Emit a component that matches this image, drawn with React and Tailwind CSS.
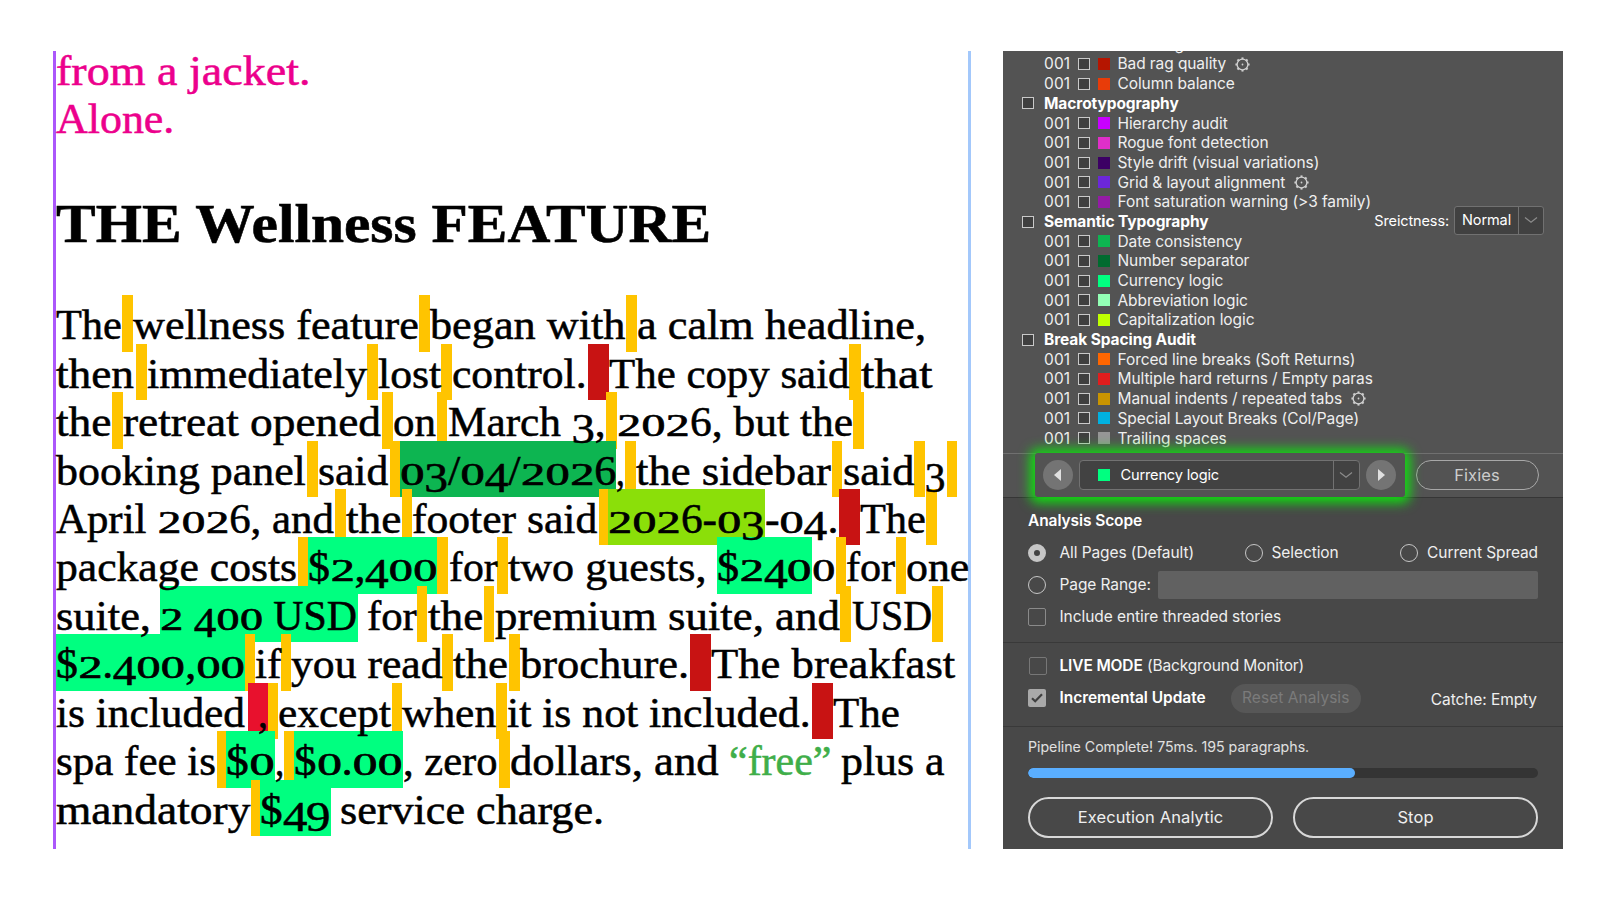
import { useLayoutEffect, useRef, useState } from "react";

const SERIF = "font-['Liberation_Serif',serif]";
const Y = "bg-[#ffc400]";
const R = "bg-[#c81313]";
const MINT = "bg-[#00ff80]";

/* Each piece: [text, left, right, background?, colour?] on the page's horizontal scale. */
const LINES = [
  [["The", 56, 122], [" ", 122, 133.3, Y], ["wellness feature", 133.3, 419], [" ", 419.3, 430, Y], ["began with", 430, 625.5], [" ", 626, 637.3, Y], ["a calm headline,", 637.5, 927]],
  [["then", 56, 134], [" ", 135.7, 147, Y], ["immediately", 147, 367], [" ", 367.5, 378, Y], ["lost", 378, 441], [" ", 441, 452.3, Y], ["control.", 452.5, 587.5], ["  ", 588, 608.7, R], ["The copy said", 608.7, 849], [" ", 849.3, 860.7, Y], ["that", 861, 932]],
  [["the", 56, 112], [" ", 112, 122.7, Y], ["retreat opened", 122.7, 381], [" ", 382, 392.7, Y], ["on", 393, 436], [" ", 436.7, 447.5, Y], ["March 3,", 448, 606], [" ", 606, 617, Y], ["2026, but the", 617, 852.5], [" ", 853, 863.7, Y]],
  [["booking panel", 56, 306], [" ", 307, 318, Y], ["said", 318, 388], [" ", 390, 400, Y], ["03/04/2026", 400, 616, "bg-[#0db551]"], [",", 616, 625], [" ", 625.3, 636.3, Y], ["the sidebar", 636.5, 831], [" ", 831.7, 842.5, Y], ["said", 843, 914], [" ", 914.3, 925.3, Y], ["3", 925.5, 946], [" ", 946.7, 957.5, Y]],
  [["April 2026, and", 56, 334], [" ", 335, 345.5, Y], ["the", 345.5, 401.5], [" ", 401.7, 412.3, Y], ["footer said", 412.5, 598], [" ", 598.7, 608.3, Y], ["2026-03", 608.3, 764.7, "bg-[#8bdf09]"], ["-04.", 765, 838.5], ["  ", 839, 859.7, R], ["The", 859.7, 925.7], [" ", 926, 937, Y]],
  [["package costs", 56, 297.5], [" ", 297.7, 308, Y], ["$2,400", 308, 437.5, MINT], [" ", 437.5, 448.3, Y], ["for", 449, 497.5], [" ", 497.5, 508.3, Y], ["two guests,", 508.5, 707.5], [" ", 707.5, 717.3], ["$240", 717.3, 811.7, MINT], ["0", 811.7, 835], [" ", 836, 846.3, Y], ["for", 846.5, 895.5], [" ", 895.7, 906.3, Y], ["one", 906.3, 969.5]],
  [["suite,", 56, 151], [" ", 151, 160.3], ["2 400 USD", 160.3, 357.7, MINT], [" ", 357.7, 367], ["for", 367, 416.7], [" ", 416.7, 427.5, Y], ["the", 427.7, 483.5], [" ", 483.7, 494.5, Y], ["premium suite, and", 494.7, 839.7], [" ", 840.3, 851.3, Y], ["USD", 852, 932], [" ", 932, 943, Y]],
  [["$2.400,00", 56, 245, MINT], [" ", 245, 255, Y], ["if", 255, 281], [" ", 281, 290.7, Y], ["you read", 290.7, 442], [" ", 442.5, 453.5, Y], ["the", 453.5, 509], [" ", 509.3, 520.3, Y], ["brochure.", 520.5, 690], ["  ", 690.5, 711, R], ["The breakfast", 711, 955]],
  [["is included", 56, 245.5], [" ", 247.5, 257.5, "bg-[#e8112d]"], [",", 257.5, 267.7, "bg-[#e8112d]"], [" ", 267.7, 278, Y], ["except", 278.5, 391.3], [" ", 391.7, 402, Y], ["when", 402, 496], [" ", 496, 507.3, Y], ["it is not included.", 507.5, 811.5], ["  ", 812, 833, R], ["The", 833, 900]],
  [["spa fee is", 56, 216], [" ", 216.5, 226.3, Y], ["$0", 226.3, 275, MINT], [",", 275, 284.5], [" ", 284.5, 294.5, Y], ["$0.00", 294.5, 403, MINT], [", zero", 403, 498], [" ", 499, 510, Y], ["dollars, and", 510, 719], [" ", 719, 729], ["“free”", 729, 831.5, "", "text-[#3fae49]"], [" ", 831.5, 841], ["plus a", 841, 945]],
  [["mandatory", 56, 250.5], [" ", 250.7, 260.5, Y], ["$49", 260.5, 331, MINT], [" ", 331, 340], ["service charge.", 340, 604]],
];

/* Old-style figures: 0-2 sit at x-height, 3, 4, 5, 7 and 9 hang below the baseline. */
function figure(ch, i) {
  if ("012".includes(ch))
    return <span key={i} className="inline-block w-[0.56em] origin-[50%_83.75%] scale-x-[1.1] scale-y-[0.74] text-center leading-none [-webkit-text-stroke:0.9px_currentColor]">{ch}</span>;
  if ("34579".includes(ch))
    return <span key={i} className="inline-block w-[0.53em] translate-y-[0.16em] scale-x-[1.08] text-center leading-none">{ch}</span>;
  return ch;
}

function Fit({ text, width }) {
  const ref = useRef(null);
  const [scale, setScale] = useState(1);
  useLayoutEffect(() => {
    setScale(width / ref.current.offsetWidth);
  }, [width]);
  return (
    <span ref={ref} className="relative z-10 inline-block origin-left whitespace-pre" style={{ transform: `scaleX(${scale})` }}>
      {/\d/.test(text) ? [...text].map(figure) : text}
    </span>
  );
}

function Line({ pieces }) {
  return (
    <div className="flex h-[48.43px] items-start">
      {pieces.map(([text, a, b, bg = "", color = ""], i) => {
        const prev = i ? pieces[i - 1][2] : 56;
        return (
          <span key={i} className={`block h-[56.5px] shrink-0 leading-[60px] whitespace-pre ${bg} ${color}`} style={{ width: b - a, marginLeft: a - prev }}>
            {text.trim() ? <Fit text={text} width={b - a} /> : text}
          </span>
        );
      })}
    </div>
  );
}

function Document() {
  return (
    <div className={`flex h-[798px] w-[918px] flex-col border-l-[3px] border-r-[3px] border-l-[#ab57fb] border-r-[#a3c8fb] text-[43px] text-black [-webkit-text-stroke:0.55px_currentColor] ${SERIF}`}>
      <div className="h-[97px] text-[#ec008c]">
        <div className="h-[49px] leading-[39.5px]"><Fit text="from a jacket." width={255} /></div>
        <div className="h-[48px] leading-[38.5px]"><Fit text="Alone." width={118.5} /></div>
      </div>
      <div className="h-[147.3px] pt-[41px] text-[54px] leading-[70px] font-bold"><Fit text="THE Wellness FEATURE" width={655} /></div>
      {LINES.map((p, i) => <Line key={i} pieces={p} />)}
    </div>
  );
}

function Gear() {
  return (
    <svg width="15" height="15" viewBox="0 0 15 15" className="ml-[9px] text-[#cfcfcf]" fill="none" stroke="currentColor">
      <circle cx="7.5" cy="7.5" r="5.4" strokeWidth="1.3" />
      <g strokeWidth="2">
        {[0, 45, 90, 135, 180, 225, 270, 315].map((a) => <path key={a} d="M7.5 2.3V0.4" transform={`rotate(${a} 7.5 7.5)`} />)}
      </g>
      <circle cx="7.5" cy="7.5" r="0.9" fill="currentColor" stroke="none" />
    </svg>
  );
}

const Box = () => <span className="size-3 shrink-0 border border-[#c9c9c9] bg-[#3f3f3f]" />;

function Item({ color, label, gear }) {
  return (
    <div className="flex h-[19.7px] items-center pl-[41px]">
      <span className="w-[34px] tracking-[0.1px]">001</span>
      <Box />
      <span className={`ml-[8px] mr-[7.5px] size-3 shrink-0 ${color}`} />
      <span>{label}</span>
      {gear && <Gear />}
    </div>
  );
}

function Section({ title, children }) {
  return (
    <div className="flex h-[19.7px] items-center pl-[19px]">
      <Box />
      <span className="ml-[10px] font-bold text-white">{title}</span>
      {children}
    </div>
  );
}

const Chevron = () => (
  <svg width="14" height="8" viewBox="0 0 14 8" fill="none" stroke="#8c8c8c" strokeWidth="1.2"><path d="M1 1.5 7 6.3 13 1.5" /></svg>
);

const Radio = ({ on }) => (
  <span className={on ? "size-[18px] shrink-0 rounded-full border-[6px] border-[#c6c6c6] bg-[#424242]" : "size-[18px] shrink-0 rounded-full border-[1.5px] border-[#c6c6c6]"} />
);

function Panel() {
  return (
    <div className="flex h-[798px] w-[560px] flex-col overflow-hidden bg-[#484848] font-[Inter,sans-serif] text-[15.5px] tracking-[-0.09px] text-[#efefef]">
      <div className="flex h-[401.5px] flex-col justify-end overflow-hidden bg-[#535353] pb-[4.5px] whitespace-nowrap">
        <Item color="bg-[#b51500]" label="Word rag" />
        <Item color="bg-[#b51500]" label="Bad rag quality" gear />
        <Item color="bg-[#e83c09]" label="Column balance" />
        <Section title="Macrotypography" />
        <Item color="bg-[#c800ff]" label="Hierarchy audit" />
        <Item color="bg-[#df2fc9]" label="Rogue font detection" />
        <Item color="bg-[#3c0064]" label="Style drift (visual variations)" />
        <Item color="bg-[#6c27d9]" label="Grid & layout alignment" gear />
        <Item color="bg-[#941ba6]" label="Font saturation warning (>3 family)" />
        <Section title="Semantic Typography">
          <span className="relative -top-px ml-auto text-[14.5px] tracking-[-0.12px] text-white">Sreictness:</span>
          <span className="relative -top-[1.5px] mr-[19px] ml-[5px] flex h-[29px] w-[90px] items-center rounded-[3px] border border-[#717171] bg-[#414141] text-[14.5px] text-white">
            <span className="flex h-full w-[64px] items-center justify-center border-r border-[#717171]">Normal</span>
            <span className="flex flex-1 justify-center"><Chevron /></span>
          </span>
        </Section>
        <Item color="bg-[#0db551]" label="Date consistency" />
        <Item color="bg-[#006b2f]" label="Number separator" />
        <Item color="bg-[#00ff80]" label="Currency logic" />
        <Item color="bg-[#93ffb5]" label="Abbreviation logic" />
        <Item color="bg-[#bfff00]" label="Capitalization logic" />
        <Section title="Break Spacing Audit" />
        <Item color="bg-[#ff6600]" label="Forced line breaks (Soft Returns)" />
        <Item color="bg-[#e11d1d]" label="Multiple hard returns / Empty paras" />
        <Item color="bg-[#c99400]" label="Manual indents / repeated tabs" gear />
        <Item color="bg-[#00b1e0]" label="Special Layout Breaks (Col/Page)" />
        <Item color="bg-[#969696]" label="Trailing spaces" />
      </div>

      <div className="flex h-[45px] shrink-0 items-center border-t border-b border-t-[#707070] border-b-[#363636] bg-[#535353] pl-8">
        <div className="relative flex h-[44px] w-[370px] shrink-0 items-center rounded-[3px] bg-[#535353] pl-[8px] shadow-[0_1px_12px_5px_#10e010]">
          <span className="flex size-[30px] items-center justify-center rounded-full bg-[#747474] pr-[2px]">
            <svg width="7" height="12" viewBox="0 0 7 12" fill="#e0e0e0"><path d="M7 0v12L0 6z" /></svg>
          </span>
          <div className="ml-[5.5px] flex h-[30px] w-[281.5px] items-center rounded-[4px] border border-[#727272] bg-[#424242] text-white">
            <span className="ml-[18.5px] size-3 bg-[#00ff80]" />
            <span className="ml-[10.5px] flex-1 pt-px text-[14.6px] tracking-[-0.17px]">Currency logic</span>
            <span className="flex h-full w-[26.5px] items-center justify-center border-l border-[#727272]"><Chevron /></span>
          </div>
          <span className="ml-[6px] flex size-[30px] items-center justify-center rounded-full bg-[#747474] pl-px">
            <svg width="7" height="12" viewBox="0 0 7 12" fill="#e0e0e0"><path d="M0 0v12l7-6z" /></svg>
          </span>
        </div>
        <button className="ml-[10.5px] h-[30px] w-[123px] rounded-full border-[1.5px] border-[#a8a8a8] text-[16.5px] tracking-[0.1px] text-[#cdcdcd]">Fixies</button>
      </div>

      <div className="flex h-[145px] shrink-0 flex-col border-b border-[#393939] pt-[13px] pr-[25px] pl-[25px]">
        <div className="h-5 leading-5 font-semibold text-white">Analysis Scope</div>
        <div className="mt-[6px] flex h-[32px] items-center">
          <Radio on /><span className="ml-[13.5px] w-[186px]">All Pages (Default)</span>
          <Radio /><span className="ml-[8.5px] w-[128.5px]">Selection</span>
          <Radio /><span className="ml-[9.5px] whitespace-nowrap">Current Spread</span>
        </div>
        <div className="flex h-[32px] items-center">
          <Radio /><span className="ml-[13.5px] w-[98px]">Page Range:</span>
          <span className="h-7 flex-1 rounded-[2px] bg-[#616161]" />
        </div>
        <div className="flex h-[32px] items-center">
          <span className="size-[18px] rounded-[2px] border border-[#8a8a8a]" /><span className="ml-[13.5px] tracking-[-0.06px]">Include entire threaded stories</span>
        </div>
      </div>

      <div className="flex h-[84px] shrink-0 flex-col border-b border-[#393939] pt-[8px] pr-[26px] pl-[25px]">
        <div className="flex h-[31px] items-center">
          <span className="ml-px size-[18px] rounded-[2px] border border-[#777]" />
          <span className="ml-[12.5px] tracking-[-0.14px]"><span className="font-semibold text-white">LIVE MODE</span> (Background Monitor)</span>
        </div>
        <div className="flex h-[33px] items-center">
          <span className="flex size-[18px] items-center justify-center rounded-[2px] bg-[#a9a9a9]">
            <svg width="12" height="10" viewBox="0 0 12 10" fill="none" stroke="#3f3f3f" strokeWidth="2.2"><path d="M1 5.2 4.2 8.2 11 1.2" /></svg>
          </span>
          <span className="ml-[13.5px] w-[171px] tracking-[-0.05px] font-semibold text-white">Incremental Update</span>
          <button className="h-[29px] w-[130.5px] rounded-full bg-[#575757] tracking-[0.05px] text-[#7b7b7b]">Reset Analysis</button>
          <span className="ml-auto pt-[3px]">Catche: Empty</span>
        </div>
      </div>

      <div className="flex flex-1 flex-col pt-[10px] pr-[25px] pl-[25px]">
        <div className="h-5 text-[14.2px] leading-5 tracking-[-0.02px] text-[#e0e0e0]">Pipeline Complete! 75ms. 195 paragraphs.</div>
        <div className="mt-[11px] h-[10px] overflow-hidden rounded-full bg-[#343434]"><div className="h-full w-[326.5px] rounded-full bg-[#5aaeff]" /></div>
        <div className="mt-[19px] flex gap-5 text-[16.5px] tracking-[0.1px]">
          <button className="h-[41px] w-[245px] rounded-full border-2 border-[#d8d8d8]">Execution Analytic</button>
          <button className="h-[41px] w-[245px] rounded-full border-2 border-[#d8d8d8]">Stop</button>
        </div>
      </div>
    </div>
  );
}

export default function App() {
  return (
    <div className="flex h-[900px] w-[1600px] items-start overflow-hidden bg-white pt-[51px] pl-[53px]">
      <Document />
      <div className="w-[32px]" />
      <Panel />
    </div>
  );
}
